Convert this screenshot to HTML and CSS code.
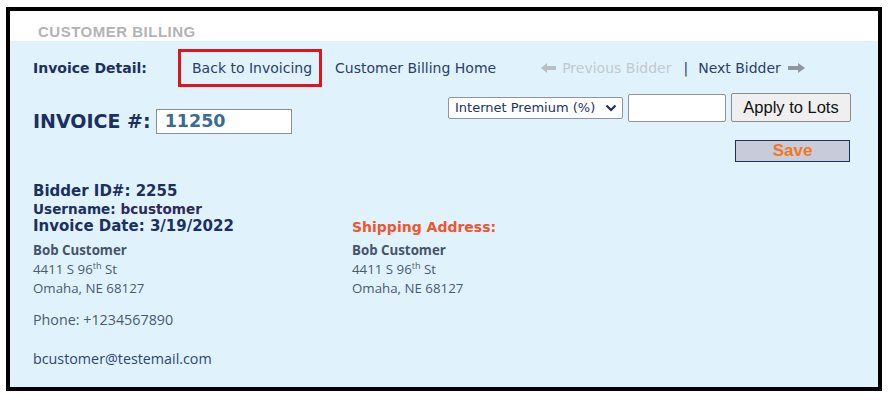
FILE: index.html
```html
<!DOCTYPE html>
<html>
<head>
<meta charset="utf-8">
<link rel="stylesheet" href="styles.css">
</head>
<body>
<div class="frame">
  <div class="header">CUSTOMER BILLING</div>
  <div class="content">
    <div class="nav">
      <span class="nav-label">Invoice Detail:</span>
      <a class="nav-link boxed">Back to Invoicing</a>
      <a class="nav-link home">Customer Billing Home</a>
      <span class="pager">
        <span class="prev">
          <svg class="arrow" width="15" height="10" viewBox="0 0 15 10"><path d="M0 5 L6 0 L6 3 L15 3 L15 7 L6 7 L6 10 Z" fill="#b9bfc5"/></svg>
          Previous Bidder
        </span>
        <span class="sep">|</span>
        <span class="next">Next Bidder
          <svg class="arrow" width="17" height="10" viewBox="0 0 17 10"><path d="M17 5 L10 0 L10 3 L0 3 L0 7 L10 7 L10 10 Z" fill="#8e959c"/></svg>
        </span>
      </span>
    </div>

    <div class="invoice-row">
      <div class="invoice-num">
        <span class="inv-label">INVOICE #:</span>
        <span class="inv-input">11250</span>
      </div>
      <div class="tools">
        <div class="tool-row">
          <span class="select">Internet Premium (%)
            <svg width="12" height="8" viewBox="0 0 12 8"><path d="M1.5 1.5 L6 6 L10.5 1.5" fill="none" stroke="#1f2f5e" stroke-width="2.2"/></svg>
          </span>
          <span class="text-input"></span>
          <span class="btn">Apply to Lots</span>
        </div>
        <div class="save-row"><span class="save">Save</span></div>
      </div>
    </div>

    <div class="info">
      <div class="col left">
        <div class="meta">Bidder ID#: 2255</div>
        <div class="meta user">Username: <span class="uname">bcustomer</span></div>
        <div class="meta">Invoice Date: 3/19/2022</div>
        <div class="addr">
          <div class="name">Bob Customer</div>
          <div>4411 S 96<sup>th</sup> St</div>
          <div>Omaha, NE 68127</div>
        </div>
        <div class="phone">Phone: +1234567890</div>
        <div class="email">bcustomer@testemail.com</div>
      </div>
      <div class="col right">
        <div class="ship">Shipping Address:</div>
        <div class="addr">
          <div class="name">Bob Customer</div>
          <div>4411 S 96<sup>th</sup> St</div>
          <div>Omaha, NE 68127</div>
        </div>
      </div>
    </div>
  </div>
</div>
</body>
</html>
```

FILE: styles.css
```css
* { box-sizing: border-box; }
html, body { margin: 0; padding: 0; background: #fff; }
body { font-family: "DejaVu Sans", Verdana, sans-serif; }

.frame {
  margin: 7px 0 0 6px;
  width: 876px;
  height: 384px;
  border: 4px solid #000;
  display: flex;
  flex-direction: column;
}

.header {
  height: 30px;
  background: #fff;
  padding-left: 28px;
  font-family: "Liberation Sans", Arial, sans-serif;
  font-weight: bold;
  font-size: 15px;
  letter-spacing: 0.5px;
  color: #b3b3b3;
  line-height: 41px;
}

.content {
  flex: 1;
  background: #e0f3fd;
  padding: 8px 27px 0 23px;
}

.nav {
  display: flex;
  align-items: center;
  height: 38px;
  font-size: 14px;
  color: #2b3e6c;
}
.nav-label {
  font-weight: bold;
  color: #1c2f62;
  width: 145px;
}
.boxed {
  border: 3px solid #e0141c;
  padding: 0 6px 0 11px;
  height: 38px;
  line-height: 32px;
  width: 144px;
  white-space: nowrap;
}
.home { margin-left: 13px; }
.pager {
  margin-left: 45px;
  display: flex;
  align-items: center;
}
.prev { color: #c2c8ce; display: flex; align-items: center; gap: 6px; }
.sep { margin: 0 10px 0 12px; color: #2b3e6c; }
.next { display: flex; align-items: center; gap: 7px; }
.arrow { display: block; }

.invoice-row {
  display: flex;
  justify-content: space-between;
}
.invoice-num {
  display: flex;
  align-items: center;
  margin-top: 22px;
  height: 24px;
}
.inv-label {
  font-weight: bold;
  font-size: 19px;
  color: #1c2f62;
  margin-right: 5px;
}
.inv-input {
  width: 136px;
  height: 25px;
  background: #fff;
  border: 1px solid #8a8f95;
  font-weight: bold;
  font-size: 17.5px;
  color: #3a6b95;
  padding-left: 8px;
  line-height: 22px;
}

.tools {
  display: flex;
  flex-direction: column;
  align-items: flex-end;
}
.tool-row {
  display: flex;
  align-items: center;
  margin-top: 6px;
}
.select {
  width: 175px;
  height: 22px;
  background: #fff;
  border: 1px solid #8f949a;
  border-radius: 2px;
  font-size: 13px;
  color: #22325f;
  padding: 0 0 0 6px;
  display: flex;
  align-items: center;
  justify-content: space-between;
  padding-right: 5px;
}
.text-input {
  width: 98px;
  height: 28px;
  background: #fff;
  border: 1px solid #8f949a;
  border-radius: 2px;
  margin-left: 5px;
}
.btn {
  margin-left: 5px;
  width: 120px;
  height: 29px;
  border: 1px solid #8b8b8b;
  border-radius: 2px;
  background: #efefef;
  font-family: "Liberation Sans", Arial, sans-serif;
  font-size: 16.5px;
  color: #111;
  display: flex;
  align-items: center;
  justify-content: center;
}
.save-row { margin-top: 18px; margin-right: 1px; }
.save {
  display: flex;
  align-items: center;
  justify-content: center;
  width: 115px;
  height: 22px;
  background: #c8ccd8;
  border: 1px solid #1e2f60;
  font-family: "Liberation Sans", Arial, sans-serif;
  font-weight: bold;
  font-size: 17px;
  color: #f07823;
}

.info {
  display: flex;
  margin-top: 21px;
}
.col.left { width: 319px; }
.meta {
  font-weight: bold;
  font-size: 15px;
  color: #1c2f62;
  line-height: 17.5px;
}
.meta.user { font-size: 13.6px; }
.uname { color: #2d2a5a; }
.ship {
  margin-top: 36px;
  font-weight: bold;
  font-size: 14px;
  color: #f05530;
}
.addr {
  font-family: "Open Sans", "Noto Sans", sans-serif;
  font-size: 13.3px;
  color: #4b5a6e;
  line-height: 19px;
  margin-top: 5px;
}
.right .addr { margin-top: 6px; }
.addr .name { font-weight: bold; color: #465369; }
.addr sup { font-size: 9px; line-height: 0; }
.phone {
  font-family: "Open Sans", "Noto Sans", sans-serif;
  font-size: 14.3px;
  color: #4b5a6e;
  margin-top: 12px;
}
.email {
  font-family: "Open Sans", "Noto Sans", sans-serif;
  font-size: 14.3px;
  color: #2e4478;
  margin-top: 20px;
}
```
